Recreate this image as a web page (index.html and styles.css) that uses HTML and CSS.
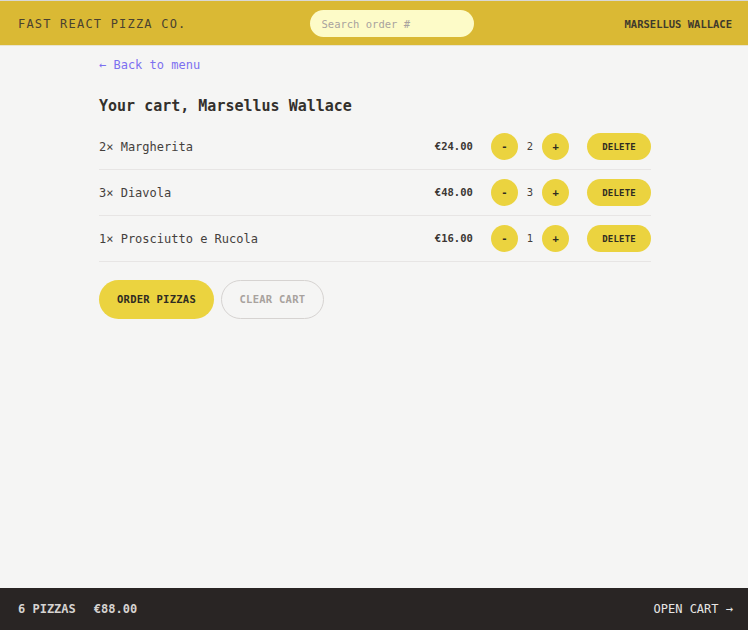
FILE: index.html
```html
<!DOCTYPE html>
<html lang="en">
<head>
<meta charset="utf-8">
<title>Fast React Pizza Co.</title>
<link rel="stylesheet" href="styles.css">
</head>
<body>
<div class="app">
  <header class="header">
    <a class="logo" href="#">Fast React Pizza Co.</a>
    <input class="search" type="text" placeholder="Search order #">
    <div class="username">Marsellus Wallace</div>
  </header>

  <main class="main">
    <a class="back" href="#">&larr; Back to menu</a>
    <h2 class="title">Your cart, Marsellus Wallace</h2>

    <ul class="cart">
      <li class="item">
        <p class="name">2&times; Margherita</p>
        <div class="controls">
          <p class="price">€24.00</p>
          <div class="qty">
            <button class="round">-</button>
            <span class="count">2</span>
            <button class="round">+</button>
          </div>
          <button class="small">Delete</button>
        </div>
      </li>
      <li class="item">
        <p class="name">3&times; Diavola</p>
        <div class="controls">
          <p class="price">€48.00</p>
          <div class="qty">
            <button class="round">-</button>
            <span class="count">3</span>
            <button class="round">+</button>
          </div>
          <button class="small">Delete</button>
        </div>
      </li>
      <li class="item">
        <p class="name">1&times; Prosciutto e Rucola</p>
        <div class="controls">
          <p class="price">€16.00</p>
          <div class="qty">
            <button class="round">-</button>
            <span class="count">1</span>
            <button class="round">+</button>
          </div>
          <button class="small">Delete</button>
        </div>
      </li>
    </ul>

    <div class="actions">
      <button class="primary">Order pizzas</button>
      <button class="secondary">Clear cart</button>
    </div>
  </main>

  <footer class="footer">
    <p class="summary"><span>6 pizzas</span><span>€88.00</span></p>
    <a class="open" href="#">Open cart &rarr;</a>
  </footer>
</div>
</body>
</html>
```

FILE: styles.css
```css
* { box-sizing: border-box; }
html, body { margin: 0; padding: 0; }
body {
  font-family: "DejaVu Sans Mono", "Liberation Mono", monospace;
  color: #44403c;
  background: #f5f5f4;
}
p, h2, ul { margin: 0; padding: 0; }
a { text-decoration: none; color: inherit; }
button { font-family: inherit; cursor: pointer; }

.app {
  height: 100vh;
  display: flex;
  flex-direction: column;
}

.header {
  display: flex;
  align-items: center;
  background: #dab934;
  border-top: 1px solid #d8d8d6;
  border-bottom: 1px solid #e9e4cf;
  padding: 9px 16px 8px 18px;
}
.logo {
  font-size: 12px;
  line-height: 18px;
  letter-spacing: 0.1em;
  text-transform: uppercase;
  color: #4a4230;
}
.search {
  margin-left: 123px;
  width: 164px;
  height: 27px;
  border: none;
  outline: none;
  border-radius: 999px;
  background: #fdfbc8;
  padding: 6px 12px;
  font-family: inherit;
  font-size: 10.5px;
  line-height: 15px;
  color: #44403c;
}
.search::placeholder { color: #a8a29e; }
.username {
  margin-left: auto;
  font-size: 10.5px;
  font-weight: 600;
  text-transform: uppercase;
  color: #3f3a2c;
}

.main {
  flex: 1;
  width: 554px;
  margin: 0 auto;
  padding: 10px 0 0 2px;
}
.back {
  display: block;
  font-size: 12px;
  line-height: 19px;
  color: #7c70f0;
}
.title {
  margin-top: 21px;
  font-size: 15px;
  line-height: 21px;
  font-weight: 600;
  color: #33302c;
}
.cart {
  list-style: none;
  margin-top: 7px;
}
.item {
  display: flex;
  align-items: center;
  justify-content: space-between;
  padding: 9px 0;
  border-bottom: 1px solid #e7e5e4;
}
.name {
  font-size: 12px;
  line-height: 18px;
}
.controls {
  display: flex;
  align-items: center;
  gap: 18px;
}
.price {
  font-size: 10.5px;
  line-height: 15px;
  font-weight: 700;
  color: #3b3733;
}
.qty {
  display: flex;
  align-items: center;
  gap: 9px;
}
.count {
  font-size: 10.5px;
  line-height: 15px;
  font-weight: 500;
}
.round {
  width: 27px;
  height: 27px;
  border: none;
  border-radius: 50%;
  background: #ebd33f;
  color: #2f2c22;
  font-size: 10.5px;
  font-weight: 600;
  line-height: 15px;
  padding: 0;
}
.small {
  height: 27px;
  padding: 0 15px;
  border: none;
  border-radius: 999px;
  background: #ebd33f;
  color: #2f2c22;
  font-size: 9px;
  line-height: 12px;
  font-weight: 600;
  letter-spacing: 0.025em;
  text-transform: uppercase;
}

.actions {
  margin-top: 18px;
  display: flex;
  gap: 7px;
}
.primary {
  height: 39px;
  padding: 0 18px;
  border: none;
  border-radius: 999px;
  background: #ebd33f;
  color: #2f2c22;
  font-size: 10.5px;
  line-height: 15px;
  font-weight: 600;
  letter-spacing: 0.025em;
  text-transform: uppercase;
}
.secondary {
  height: 39px;
  padding: 0 17.5px;
  border: 1.5px solid #d6d3d1;
  border-radius: 999px;
  background: transparent;
  color: #a8a29e;
  font-size: 10.5px;
  line-height: 15px;
  font-weight: 600;
  letter-spacing: 0.025em;
  text-transform: uppercase;
}

.footer {
  height: 42px;
  display: flex;
  align-items: center;
  justify-content: space-between;
  padding: 0 15px 0 18px;
  background: #292524;
  color: #e7e5e4;
  text-transform: uppercase;
  font-size: 12px;
  line-height: 18px;
}
.summary {
  display: flex;
  gap: 18px;
  font-weight: 600;
  color: #d6d3d1;
}
```
